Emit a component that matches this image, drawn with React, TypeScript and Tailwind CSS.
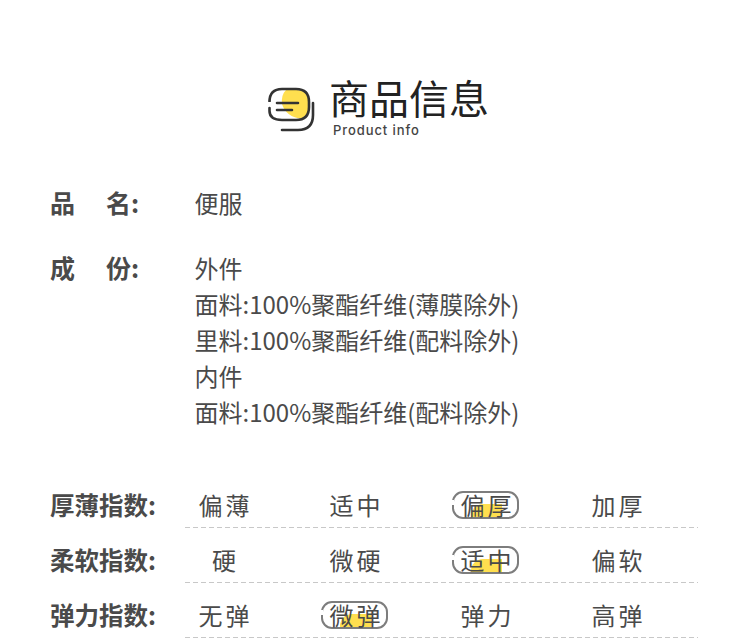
const cjk = "font-['Noto_Sans_CJK_SC','Noto_Sans_CJK_JP',sans-serif]";

function Logo() {
  return (
    <svg width="56" height="54" viewBox="0 0 56 54" fill="none" className="shrink-0">
      <path d="M24 8H35Q46 8 46.5 20V26Q46 35 40 37Q24 35 20 22Q19 13 24 8Z" fill="#ffdf4f" />
      <path d="M7.5 18V20Q7.5 7 20 7H34Q47 7 47 20V25Q47 38 34 38H20Q7.5 38 7.5 29V26" stroke="#333" strokeWidth="2.6" strokeLinecap="round" />
      <path d="M15 21H36M15 28H30" stroke="#333" strokeWidth="2.6" strokeLinecap="round" />
      <path d="M51 21V33Q51 48 36 48H20" stroke="#333" strokeWidth="2.6" strokeLinecap="round" />
    </svg>
  );
}

function Cell({ text, on }: { text: string; on?: boolean }) {
  return (
    <div className="relative flex h-7 w-[67px] items-center justify-center text-[24px] leading-7">
      {on && <span className="absolute left-[19px] top-[13px] h-[15px] w-[31px] rounded-tl-xl bg-[#ffdf4f]" />}
      {on && <span className="absolute inset-0 rounded-[11px] border-2 border-[#7d7d7d]" />}
      {on && <span className="absolute left-0 top-[9px] h-[5px] w-[2px] bg-white" />}
      <span className={`relative ${text.length > 1 ? "pl-[4px] tracking-[3px]" : "pl-[1px]"}`}>{text}</span>
    </div>
  );
}

function Row({ label, items, active }: { label: string; items: string[]; active: number }) {
  return (
    <div className="flex h-[55px]">
      <div className="w-[135px] pt-[8px] text-[24.5px] leading-8 font-bold text-[#4a4a4a]">{label}</div>
      <div className="w-[513px]">
        <div className="flex h-[46px] items-start gap-[64px] pt-[10px] pl-[5px]">
          {items.map((t, i) => <Cell key={t} text={t} on={i === active} />)}
        </div>
        <div className="h-px bg-[repeating-linear-gradient(90deg,#c8c8c8_0_5px,transparent_5px_8px)]" />
      </div>
    </div>
  );
}

export default function App() {
  return (
    <div className={`${cjk} h-[642px] w-[750px] overflow-hidden bg-white text-[#4a4a4a]`}>
      <header className="flex h-[184px] items-start justify-center pt-[74px]">
        <div className="mt-[8px]"><Logo /></div>
        <div className="ml-[11px] w-[159px]">
          <div className="text-[40px] leading-[46px] whitespace-nowrap text-[#222]">商品信息</div>
          <div className="mt-[2px] ml-[4px] font-['Inter',sans-serif] text-[13px] leading-4 font-medium tracking-[0.07em] text-[#444]">Product info</div>
        </div>
      </header>
      <main className="pl-[50px]">
        <div className="flex text-[24px] leading-9">
          <div className="w-[144.5px] text-[25px] font-bold">品<span className="ml-[31px]">名:</span></div>
          <div className="pt-[1px]">便服</div>
        </div>
        <div className="mt-[28px] flex text-[24px] leading-9">
          <div className="w-[144.5px] text-[25px] font-bold">成<span className="ml-[31px]">份:</span></div>
          <div className="pt-[1px]">
            <div>外件</div>
            <div>面料:100%聚酯纤维(薄膜除外)</div>
            <div>里料:100%聚酯纤维(配料除外)</div>
            <div>内件</div>
            <div>面料:100%聚酯纤维(配料除外)</div>
          </div>
        </div>
        <div className="mt-[51px]">
          <Row label="厚薄指数:" items={["偏薄", "适中", "偏厚", "加厚"]} active={2} />
          <Row label="柔软指数:" items={["硬", "微硬", "适中", "偏软"]} active={2} />
          <Row label="弹力指数:" items={["无弹", "微弹", "弹力", "高弹"]} active={1} />
        </div>
      </main>
    </div>
  );
}
